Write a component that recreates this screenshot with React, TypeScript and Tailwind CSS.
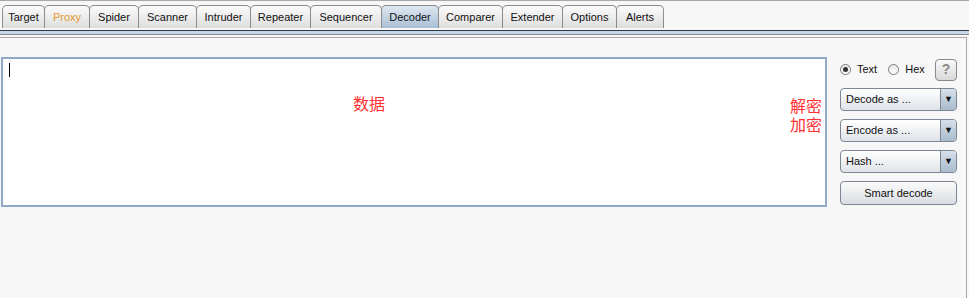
import React from "react";

const tabs: { label: string; w: number; orange?: boolean; active?: boolean }[] = [
  { label: "Target", w: 43 },
  { label: "Proxy", w: 46, orange: true },
  { label: "Spider", w: 50 },
  { label: "Scanner", w: 59 },
  { label: "Intruder", w: 55 },
  { label: "Repeater", w: 61 },
  { label: "Sequencer", w: 72 },
  { label: "Decoder", w: 58, active: true },
  { label: "Comparer", w: 65 },
  { label: "Extender", w: 61 },
  { label: "Options", w: 55 },
  { label: "Alerts", w: 48 },
];

function Combo({ label }: { label: string }) {
  return (
    <div className="flex h-[23px] w-[117px] rounded-[4px] border border-[#7d8794] bg-gradient-to-b from-[#ffffff] to-[#dfe3e8] overflow-hidden">
      <div className="flex-1 flex items-center pl-[5px] text-[11px] text-[#111]">{label}</div>
      <div className="w-[16px] flex items-center justify-center border-l border-[#7d8794] bg-gradient-to-b from-[#d6e0ea] to-[#a9bbcd] text-[9px] text-[#111]">
        ▼
      </div>
    </div>
  );
}

function Radio({ checked }: { checked?: boolean }) {
  return (
    <div className="w-[11px] h-[11px] rounded-full border border-[#7a7a7a] bg-gradient-to-b from-[#e8e8e8] to-[#ffffff] flex items-center justify-center">
      {checked && <div className="w-[5px] h-[5px] rounded-full bg-[#333]" />}
    </div>
  );
}

export default function App() {
  return (
    <div
      className="w-[969px] h-[298px] bg-[#f7f7f7] overflow-hidden flex flex-col"
      style={{ fontFamily: '"Liberation Sans", Arial, sans-serif' }}
    >
      <div className="h-[2px] border-t border-[#a8a8a8]" />
      <div className="flex pl-[2px] pt-[3px] h-[28px]">
        {tabs.map((t) => (
          <div
            key={t.label}
            style={{ width: t.w }}
            className={`h-[23px] -mr-px flex items-center justify-center rounded-t-[5px] border border-b-0 border-[#8c8c8c] text-[11px] ${
              t.active
                ? "bg-gradient-to-b from-[#dfe8f1] to-[#a9bfd5] text-[#111]"
                : "bg-gradient-to-b from-[#fbfbfb] to-[#dedede] text-[#111]"
            } ${t.orange ? "text-[#e39a2c]" : ""}`}
          >
            {t.label}
          </div>
        ))}
      </div>
      <div className="h-px bg-[#2d3947]" />
      <div className="h-[3px] bg-[#c3d6ea]" />
      <div className="h-px bg-[#8a8a8a]" />
      <div className="flex-1 mt-[2px] mr-[2px] border-t border-r border-[#a9a9a9] flex pt-[19px] pl-[1px]">
        <div className="relative w-[826px] h-[150px] border-2 border-[#90a9c6] bg-white">
          <div className="absolute left-[6px] top-[4px] w-px h-[14px] bg-black" />
          <div
            className="absolute left-[350px] top-[35px] text-[16px] leading-[19px] text-[#ff3030]"
            style={{ fontFamily: '"Noto Sans CJK SC", sans-serif' }}
          >
            数据
          </div>
          <div
            className="absolute left-[787px] top-[37px] flex flex-col text-[16px] leading-[19px] text-[#ff3030]"
            style={{ fontFamily: '"Noto Sans CJK SC", sans-serif' }}
          >
            <span>解密</span>
            <span>加密</span>
          </div>
        </div>
        <div className="ml-[13px] flex flex-col w-[117px]">
          <div className="flex items-center h-[23px] mt-[1px]">
            <Radio checked />
            <span className="ml-[6px] text-[11px] text-[#111]">Text</span>
            <div className="ml-[11px]">
              <Radio />
            </div>
            <span className="ml-[6px] text-[11px] text-[#111]">Hex</span>
            <div className="ml-auto w-[22px] h-[22px] rounded-[4px] border border-[#8a8a8a] bg-gradient-to-b from-[#fafafa] to-[#d8d8d8] flex items-center justify-center text-[14px] font-bold text-[#8a8a8a]">
              ?
            </div>
          </div>
          <div className="mt-[7px] flex flex-col gap-[8px]">
            <Combo label="Decode as ..." />
            <Combo label="Encode as ..." />
            <Combo label="Hash ..." />
            <div className="h-[24px] w-[117px] rounded-[4px] border border-[#7d8794] bg-gradient-to-b from-[#fbfbfb] to-[#d9dde2] flex items-center justify-center text-[11px] text-[#111]">
              Smart decode
            </div>
          </div>
        </div>
      </div>
    </div>
  );
}
